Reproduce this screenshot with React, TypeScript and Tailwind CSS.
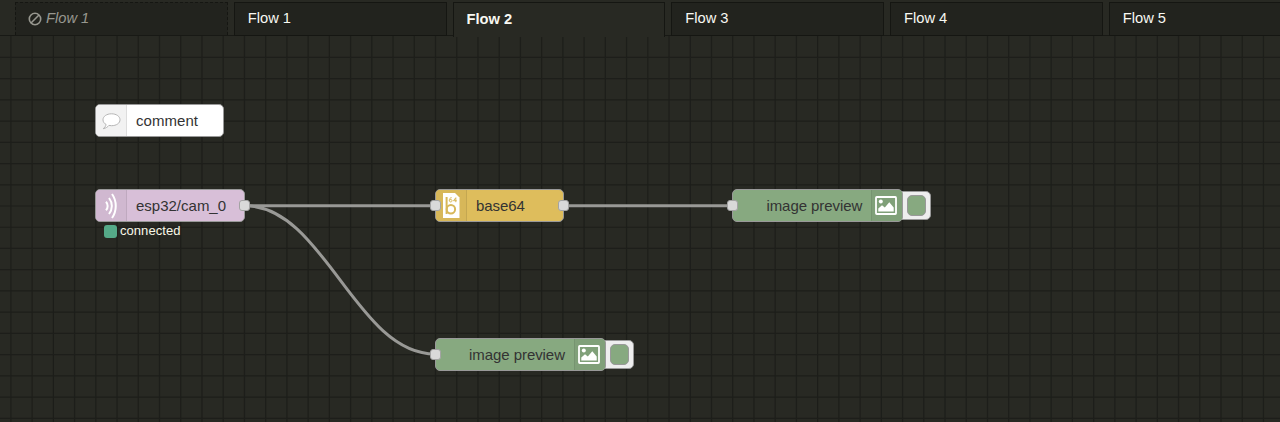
import type { ReactNode } from "react";

const STEP = 21.23;
const columns = Array.from({ length: 60 }, (_, i) => 10.9 + i * STEP);
const rows = Array.from({ length: 18 }, (_, i) => 21.4 + i * STEP);

function Grid() {
  return (
    <svg className="absolute inset-0" width="1280" height="386" stroke="#1d1e1a" strokeWidth="1.2">
      {columns.map((x) => (
        <line key={x} x1={x} x2={x} y1="0" y2="386" />
      ))}
      {rows.map((y) => (
        <line key={y} x1="0" x2="1280" y1={y} y2={y} />
      ))}
    </svg>
  );
}

function Wires() {
  return (
    <svg className="absolute inset-0" width="1280" height="386" fill="none" stroke="#999996" strokeWidth="3">
      <path d="M245 169.700H435" />
      <path d="M563 169.700H733" />
      <path d="M245 169.700C324 169.700 356 318 435 318" />
    </svg>
  );
}

function Port({ side }: { side: "left" | "right" }) {
  return (
    <span
      className={`absolute top-[10px] h-[11px] w-[11px] rounded-[3px] border border-[#a3a3a3] bg-[#d9d9d9] ${
        side === "left" ? "left-[-6px]" : "right-[-6px]"
      }`}
    />
  );
}

function Node({ place, children }: { place: string; children: ReactNode }) {
  return (
    <div
      className={`absolute flex h-[33px] items-center rounded-[5px] border border-[#999] text-[15px] leading-none text-[#333] ${place}`}
    >
      {children}
    </div>
  );
}

function ImagePreview({ place }: { place: string }) {
  return (
    <div className={`absolute flex h-[33px] w-[200px] items-center ${place}`}>
      <span className="absolute left-[160px] top-[2px] flex h-[29px] w-[38.5px] items-center justify-end rounded-[5px] border border-[#999] bg-[#eee] pr-[4px]">
        <span className="h-[21px] w-[19px] rounded-[5px] border border-[#999] bg-[#87a980]" />
      </span>
      <Node place="left-0 top-0 w-[171px] bg-[#87a980]">
        <Port side="left" />
        <span className="ml-[33px] w-[105px] whitespace-nowrap tracking-[-0.06px]">image preview</span>
        <span className="flex h-full w-[31px] items-center justify-center rounded-r-[4px] border-l border-[#769470] bg-[#80a079] pr-[2px]">
          <svg width="22" height="19" viewBox="0 0 22 19">
            <rect x="1" y="1" width="20" height="17" rx="0.8" fill="none" stroke="#fff" strokeWidth="1.8" />
            <circle cx="5.8" cy="5.6" r="2" fill="#fff" />
            <path d="M3.300 15.600v-3L7 9.300l2.800 2.300 4.500-5.400 4.400 5.200v4.200z" fill="#fff" />
          </svg>
        </span>
      </Node>
    </div>
  );
}

function Tab({ label, look }: { label: string; look: string }) {
  return (
    <div className={`flex w-[212.75px] shrink-0 items-center border pl-[13px] text-[14.7px] text-[#f8f8f2] ${look}`}>
      {label}
    </div>
  );
}

const idle = "h-[34px] border-[#151612] bg-[#22231e] pb-[2px]";

export default function App() {
  return (
    <div className="h-[422px] w-[1280px] overflow-hidden bg-[#282923] font-['Liberation_Sans',Arial,sans-serif]">
      <div className="relative z-10 flex h-[36px] gap-[6px] border-b border-[#181915] pl-[15px] pt-[2px]">
        <div className="flex h-[33px] w-[212.75px] shrink-0 items-center gap-[4px] border border-b-0 border-dashed border-[#151612] bg-[#22231e] pb-px pl-[12px] text-[14.7px] italic text-[#97978f]">
          <svg width="14" height="14" viewBox="0 0 14 14" fill="none" stroke="currentColor" strokeWidth="1.6">
            <circle cx="7" cy="7" r="5.7" />
            <path d="M3 11l8-8" />
          </svg>
          Flow 1
        </div>
        <Tab label="Flow 1" look={idle} />
        <Tab label="Flow 2" look="h-[35px] border-b-0 border-[#151612] bg-[#282923] pb-[2px] font-bold" />
        <Tab label="Flow 3" look={idle} />
        <Tab label="Flow 4" look={idle} />
        <Tab label="Flow 5" look={idle} />
      </div>
      <div className="relative h-[386px]">
        <Grid />
        <Wires />
        <Node place="left-[95px] top-[68px] w-[128.5px] bg-white">
          <span className="flex h-full w-[31px] items-center justify-center rounded-l-[4px] border-r border-[#ddd] bg-[#f2f2f2]">
            <svg width="20" height="18" viewBox="0 0 20 18" fill="#fff" stroke="#b5b5b5" strokeWidth="1">
              <path d="M10.500 1.800C5.600 1.800 2 4.400 2 7.800c0 2 1.200 3.700 3.100 4.700-.4 1.800-1.400 3-2.900 4.200 2.600-.5 4.500-1.700 5.700-3.300.8.200 1.700.3 2.600.3 4.900 0 8.500-2.500 8.500-5.900s-3.600-6-8.500-6z" />
            </svg>
          </span>
          <span className="ml-[9px] tracking-[0.05px]">comment</span>
        </Node>
        <Node place="left-[95px] top-[153px] w-[149.5px] bg-[#d8bfd8]">
          <span className="flex h-full w-[31px] items-center justify-center rounded-l-[4px] border-r border-[#bfa9bf] bg-[#d0b8d0]">
            <svg width="22" height="28" viewBox="0 0 22 28" fill="none" stroke="#fff">
              <path d="M6 9.700c2.200 2.400 2.200 6.200 0 8.600" strokeWidth="2" />
              <path d="M9 6c3.800 4.800 3.800 11.200 0 16" strokeWidth="2" />
              <path d="M12 2c5 7 5 17 0 24" strokeWidth="2" />
            </svg>
          </span>
          <span className="ml-[9px]">esp32/cam_0</span>
          <Port side="right" />
        </Node>
        <div className="absolute left-[103.5px] top-[188px] flex h-[14px] items-center gap-[3.5px] text-[13px] leading-none tracking-[0.05px] text-[#f8f8e8]">
          <span className="h-[13px] w-[13px] rounded-[3px] bg-[#55aa88]" />
          <span className="pb-px">connected</span>
        </div>
        <Node place="left-[435px] top-[153px] w-[128.5px] bg-[#debd5c]">
          <span className="flex h-full w-[31px] items-center justify-center rounded-l-[4px] border-r border-[#c4a751] bg-[#d7b759]">
            <svg width="18" height="25" viewBox="0 0 18 25">
              <path d="M1 0h12l4.500 4.500V25H1z" fill="#fff" />
              <path d="M4.600 4v17" stroke="#d7b759" strokeWidth="2" />
              <circle cx="8.900" cy="16.200" r="4.200" fill="none" stroke="#d7b759" strokeWidth="2" />
              <path
                d="M9.700 4.700C8 4.500 7.300 6 7.400 7.600c.1 2 2.700 1.700 2.600 0-.1-1.400-2-1.500-2.600-.2M13.800 9.200V4.700l-2.300 3h3.200"
                fill="none"
                stroke="#d7b759"
                strokeWidth="1"
              />
            </svg>
          </span>
          <span className="ml-[9px] tracking-[-0.05px]">base64</span>
          <Port side="left" />
          <Port side="right" />
        </Node>
        <ImagePreview place="left-[732.400px] top-[153px]" />
        <ImagePreview place="left-[435px] top-[301.500px]" />
      </div>
    </div>
  );
}
